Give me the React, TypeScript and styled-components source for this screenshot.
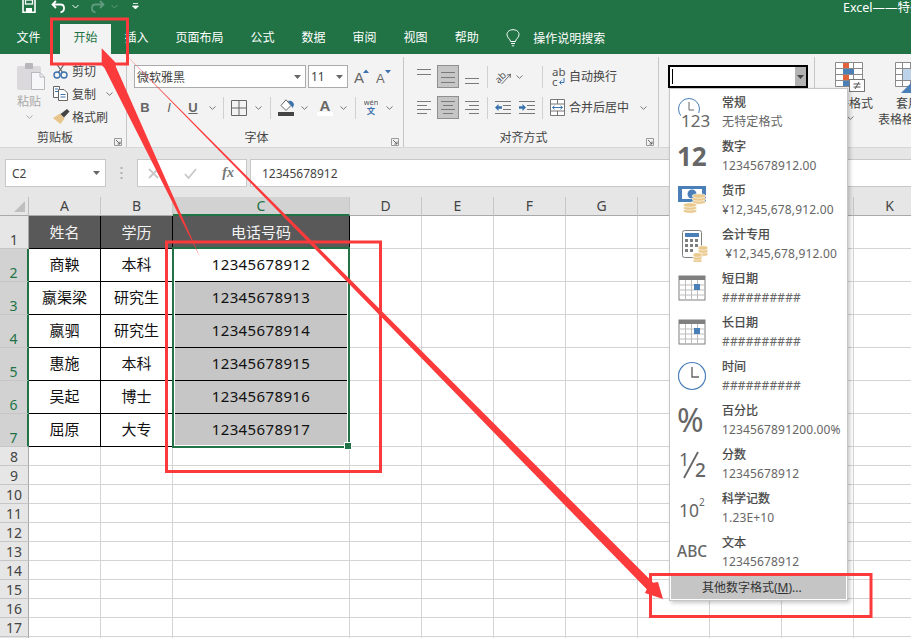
import React from 'react';
import styled, { createGlobalStyle } from 'styled-components';

const FONT = `"Noto Sans", "Noto Sans CJK SC", sans-serif`;
const GREEN = '#217346';
const RED = '#fb3a3c';
const ICON_GREY = '#7f7f7f';
const BLUE = '#4a7fb8';

const GlobalStyle = createGlobalStyle`
  html, body {
    margin: 0;
    padding: 0;
    background: #fff;
  }
  * {
    box-sizing: border-box;
  }
`;

const Page = styled.div`
  position: relative;
  width: 911px;
  height: 638px;
  overflow: hidden;
  display: flex;
  flex-direction: column;
  background: #e6e6e6;
  font-family: ${FONT};
  font-size: 12px;
  color: #444;
`;

const TitleBar = styled.div`
  height: 24px;
  flex: none;
  display: flex;
  align-items: flex-start;
  background: ${GREEN};
  color: #fff;
  padding-left: 22px;
  overflow: hidden;
`;

const QuickButton = styled.div<{ $w: number; $left?: number }>`
  width: ${(p) => p.$w}px;
  margin-left: ${(p) => p.$left ?? 0}px;
  display: flex;
  justify-content: center;
  flex: none;
`;

const TitleText = styled.div`
  margin-left: auto;
  width: 68px;
  white-space: nowrap;
  overflow: hidden;
  font-size: 12.5px;
  line-height: 15px;
`;

const TabBar = styled.div`
  height: 30px;
  flex: none;
  display: flex;
  align-items: stretch;
  padding-left: 3px;
  background: ${GREEN};
`;

const Tab = styled.div<{ $active?: boolean; $gap?: number }>`
  padding: 0 13.5px;
  margin-right: ${(p) => p.$gap ?? 0}px;
  display: flex;
  align-items: center;
  line-height: 1;
  padding-bottom: 2px;
  color: ${(p) => (p.$active ? GREEN : '#fff')};
  background: ${(p) => (p.$active ? '#f3f3f3' : 'transparent')};
`;

const SearchHint = styled.div`
  margin-left: 14px;
  display: flex;
  align-items: center;
  gap: 13px;
  color: #fff;
  padding-bottom: 2px;
`;

const Ribbon = styled.div`
  height: 94px;
  flex: none;
  display: flex;
  padding-top: 3px;
  background: #f3f3f3;
  border-bottom: 1px solid #d6d6d6;
`;

const RibbonGroup = styled.div<{ $w: number }>`
  width: ${(p) => p.$w}px;
  height: 90px;
  flex: none;
  display: flex;
  flex-direction: column;
  border-right: 1px solid #c6c6c6;
`;

const GroupBody = styled.div<{ $top?: number; $left?: number }>`
  flex: 1;
  min-height: 0;
  display: flex;
  flex-direction: column;
  padding-top: ${(p) => p.$top ?? 8}px;
  padding-left: ${(p) => p.$left ?? 0}px;
`;

const GroupLabel = styled.div<{ $pad: number }>`
  position: relative;
  height: 21px;
  flex: none;
  display: flex;
  align-items: center;
  justify-content: center;
  line-height: 1;
  padding: 2px ${(p) => p.$pad}px 0 0;
`;

const Launcher = styled.svg`
  position: absolute;
  right: 4px;
  bottom: 1px;
`;

const ClipLayout = styled.div`
  display: flex;
  padding-top: 1px;
`;

const PasteColumn = styled.div`
  width: 36px;
  flex: none;
  display: flex;
  flex-direction: column;
  margin-left: 17px;
  color: #a8a8a8;
`;

const PasteArt = styled.div`
  height: 32px;
  padding-top: 4px;
`;

const PasteLabel = styled.div`
  width: 24px;
  margin-top: 3px;
  line-height: 16px;
  white-space: nowrap;
`;

const PasteChevron = styled.div`
  width: 24px;
  display: flex;
  justify-content: center;
  margin-top: 5px;
`;

const ClipList = styled.div`
  display: flex;
  flex-direction: column;
`;

const ClipRow = styled.div`
  height: 23px;
  display: flex;
  align-items: center;
  white-space: nowrap;
`;

const ClipIcon = styled.div`
  width: 19px;
  flex: none;
  display: flex;
`;

const ClipChevron = styled.div`
  margin-left: 10px;
  display: flex;
`;

const ToolRow = styled.div<{ $top?: number }>`
  height: 23px;
  display: flex;
  align-items: center;
  margin-top: ${(p) => p.$top ?? 0}px;
`;

const ComboBox = styled.div<{ $w: number }>`
  width: ${(p) => p.$w}px;
  height: 23px;
  flex: none;
  display: flex;
  align-items: center;
  justify-content: space-between;
  padding: 0 4px 0 2px;
  margin-right: 2px;
  background: #fff;
  border: 1px solid #ababab;
  font-size: 12px;
  white-space: nowrap;
`;

const Tool = styled.div<{
  $w: number;
  $bold?: boolean;
  $italic?: boolean;
  $underline?: boolean;
  $left?: number;
  $right?: number;
}>`
  width: ${(p) => p.$w}px;
  height: 23px;
  flex: none;
  display: flex;
  align-items: center;
  justify-content: center;
  margin: 0 ${(p) => p.$right ?? 0}px 0 ${(p) => p.$left ?? 0}px;
  font-family: "Liberation Sans", sans-serif;
  font-size: 13px;
  color: #666;
  font-weight: ${(p) => (p.$bold ? 700 : 400)};
  font-style: ${(p) => (p.$italic ? 'italic' : 'normal')};
  text-decoration: ${(p) => (p.$underline ? 'underline' : 'none')};
`;

const ToolSeparator = styled.div<{ $left: number; $right: number }>`
  width: 1px;
  height: 22px;
  flex: none;
  margin: 0 ${(p) => p.$right}px 0 ${(p) => p.$left}px;
  background: #d0d0d0;
`;

const PressedTool = styled.div`
  width: 22px;
  height: 23px;
  flex: none;
  margin: 0 6px;
  display: flex;
  align-items: center;
  justify-content: center;
  background: #c6c6c6;
  border: 1px solid #8f8f8f;
`;

const RowText = styled.div`
  white-space: nowrap;
  color: #444;
  line-height: 1;
`;

const NumberCombo = styled.div`
  width: 140px;
  height: 23px;
  margin-left: 9px;
  display: flex;
  justify-content: space-between;
  background: #fff;
  border: 2px solid #000;
`;

const TextCaret = styled.div`
  width: 1px;
  height: 15px;
  margin: 2px 0 0 2px;
  background: #000;
`;

const ComboArrow = styled.div`
  width: 11px;
  display: flex;
  align-items: center;
  justify-content: center;
  background: #b3b3b3;
`;

const StylesBody = styled.div`
  display: flex;
  padding: 5px 0 0 10px;
`;

const StyleColumn = styled.div<{ $w: number; $gap: number }>`
  width: ${(p) => p.$w}px;
  margin-right: ${(p) => p.$gap}px;
  flex: none;
  display: flex;
  flex-direction: column;
  line-height: 16px;
  white-space: nowrap;
`;

const StyleIcon = styled.div<{ $left: number }>`
  height: 31px;
  padding-left: ${(p) => p.$left}px;
  margin-bottom: 3px;
`;

const StyleLine = styled.div<{ $left?: number }>`
  padding-left: ${(p) => p.$left ?? 0}px;
`;

const StyleChevron = styled.div`
  display: flex;
  justify-content: center;
  padding: 4px 0 0 2px;
`;

const FormulaRow = styled.div`
  height: 49px;
  flex: none;
  display: flex;
  padding: 11px 0 10px 5px;
  background: #e6e6e6;
`;

const NameBox = styled.div`
  width: 101px;
  flex: none;
  display: flex;
  align-items: center;
  justify-content: space-between;
  padding: 0 5px 0 6px;
  background: #fff;
  border: 1px solid #c8c8c8;
`;

const FormulaDots = styled.div`
  width: 31px;
  flex: none;
  display: flex;
  align-items: center;
  justify-content: center;
`;

const FormulaButtons = styled.div`
  width: 110px;
  flex: none;
  display: flex;
  align-items: center;
  justify-content: space-between;
  padding: 0 12px 0 10px;
  background: #fff;
  border: 1px solid #c8c8c8;
`;

const FxMark = styled.span`
  font-family: "Liberation Serif", serif;
  font-style: italic;
  font-size: 14px;
  font-weight: 700;
  color: #777;
`;

const FormulaInput = styled.div`
  flex: 1;
  margin-left: 3px;
  display: flex;
  align-items: center;
  padding-left: 11px;
  background: #fff;
  border: 1px solid #c8c8c8;
  border-right: 0;
`;

const Sheet = styled.div`
  position: relative;
  flex: 1;
  min-height: 0;
  overflow: hidden;
  display: grid;
  grid-template-columns: 29px 72px 72px 177px repeat(8, 72px);
  grid-template-rows: 19px repeat(7, 33px) repeat(11, 19px);
  background: #fff;
`;

const Corner = styled.div`
  position: relative;
  background: #e6e6e6;
  border-right: 1px solid #bdbdbd;
  border-bottom: 1px solid #a9a9a9;
  &::after {
    content: '';
    position: absolute;
    right: 3px;
    bottom: 3px;
    border-style: solid;
    border-width: 0 0 11px 11px;
    border-color: transparent transparent #bfbfbf transparent;
  }
`;

const ColumnHeader = styled.div<{ $selected?: boolean }>`
  display: flex;
  align-items: center;
  justify-content: center;
  font-size: 14px;
  line-height: 1;
  color: ${(p) => (p.$selected ? GREEN : '#444')};
  background: ${(p) => (p.$selected ? '#d2d2d2' : '#e6e6e6')};
  border-right: 1px solid #c6c6c6;
  border-bottom: ${(p) => (p.$selected ? `2px solid ${GREEN}` : '1px solid #a9a9a9')};
`;

const RowHeader = styled.div<{ $selected?: boolean }>`
  display: flex;
  align-items: flex-end;
  justify-content: center;
  font-size: 14px;
  line-height: 17px;
  color: ${(p) => (p.$selected ? GREEN : '#444')};
  background: ${(p) => (p.$selected ? '#d2d2d2' : '#e6e6e6')};
  border-right: ${(p) => (p.$selected ? `2px solid ${GREEN}` : '1px solid #a9a9a9')};
  border-bottom: 1px solid #c6c6c6;
`;

const Cell = styled.div`
  border-right: 1px solid #d4d4d4;
  border-bottom: 1px solid #d4d4d4;
`;

const TableCell = styled.div<{ $head?: boolean; $shade?: boolean; $digits?: boolean }>`
  display: flex;
  align-items: center;
  justify-content: center;
  padding-bottom: ${(p) => (p.$head ? 0 : 2)}px;
  font-size: 15px;
  line-height: 1;
  white-space: nowrap;
  letter-spacing: ${(p) => (p.$digits ? '0.38px' : '0')};
  color: ${(p) => (p.$head ? '#f2f2f2' : '#111')};
  background: ${(p) => (p.$head ? '#595959' : p.$shade ? '#c6c6c6' : '#fff')};
  border-right: 1px solid #000;
  border-bottom: 1px solid #000;
`;

const SelectionFrame = styled.div`
  position: absolute;
  left: 172px;
  top: 50px;
  width: 178px;
  height: 201px;
  border: 2px solid ${GREEN};
  box-shadow: inset 0 0 0 1px #fff;
`;

const FillHandle = styled.div`
  position: absolute;
  right: -3px;
  bottom: -3px;
  width: 6px;
  height: 6px;
  background: ${GREEN};
  outline: 1px solid #fff;
`;

const FormatMenu = styled.div`
  position: absolute;
  left: 669px;
  top: 88px;
  width: 179px;
  height: 513px;
  display: flex;
  flex-direction: column;
  padding-top: 1px;
  background: #fff;
  border: 1px solid #c6c6c6;
  box-shadow: 2px 2px 4px rgba(0, 0, 0, 0.22);
`;

const MenuItem = styled.div`
  height: 44px;
  flex: none;
  display: flex;
  padding-left: 6px;
`;

const MenuIcon = styled.div`
  width: 46px;
  flex: none;
  padding-top: 4px;
`;

const MenuText = styled.div`
  display: flex;
  flex-direction: column;
  padding-top: 4px;
  white-space: pre;
`;

const MenuTitle = styled.div`
  line-height: 17px;
  color: #444;
  font-weight: 400;
  -webkit-text-stroke: 0.25px #444;
`;

const MenuSample = styled.div`
  line-height: 22px;
  color: #666;
  letter-spacing: 0.15px;
`;

const MoreFormats = styled.div`
  height: 26px;
  display: flex;
  align-items: center;
  padding-left: 31px;
  background: #c5c5c5;
  border: 1px solid #fff;
  color: #333;
`;

const Annotations = styled.svg`
  position: absolute;
  left: 0;
  top: 0;
  pointer-events: none;
`;

const Chevron = ({ color = '#777' }: { color?: string }) => (
  <svg width="7" height="4" viewBox="0 0 7 4">
    <path d="M0.5 0.5 L3.5 3.3 L6.5 0.5" fill="none" stroke={color} strokeWidth="1" />
  </svg>
);

const Caret = ({ color = '#666' }: { color?: string }) => (
  <svg width="7" height="4" viewBox="0 0 7 4">
    <path d="M0 0 H7 L3.5 4 Z" fill={color} />
  </svg>
);

const LauncherIcon = () => (
  <Launcher width="8" height="8" viewBox="0 0 8 8">
    <path d="M0.5 7.5 V0.5 H7.5 V7.5 H0.5" fill="none" stroke="#999" strokeWidth="1" />
    <path d="M2 2 L6 6 M6 3.5 V6 H3.5" fill="none" stroke="#666" strokeWidth="1" />
  </Launcher>
);

// lines for the alignment buttons: y, x1, x2
const Lines = ({ w, h, rows }: { w: number; h: number; rows: [number, number, number][] }) => (
  <svg width={w} height={h} viewBox={`0 0 ${w} ${h}`}>
    {rows.map(([y, a, b]) => (
      <path key={y} d={`M${a} ${y + 0.5} H${b}`} stroke="#7a7a7a" strokeWidth="1" />
    ))}
  </svg>
);

const PasteIcon = () => (
  <svg width="28" height="28" viewBox="0 0 28 28">
    <rect x="0" y="3" width="24" height="24" rx="2" fill="#dcd9dd" />
    <rect x="8" y="0" width="8" height="6" rx="1" fill="#b9b6bb" />
    <path d="M14.5 9.5 H23 L27.5 14 V26.5 H14.5 Z" fill="#f7f6f8" stroke="#bcb8bf" />
    <path d="M23 9.5 V14 H27.5" fill="none" stroke="#bcb8bf" />
  </svg>
);

const ScissorsIcon = () => (
  <svg width="15" height="17" viewBox="0 0 15 17">
    <path d="M3 1 L10 11 M12 1 L5 11" stroke="#666" strokeWidth="1.3" fill="none" />
    <circle cx="4" cy="13" r="3" fill="none" stroke="#3a72ad" strokeWidth="1.4" />
    <circle cx="11" cy="13" r="3" fill="none" stroke="#3a72ad" strokeWidth="1.4" />
  </svg>
);

const CopyIcon = () => (
  <svg width="15" height="15" viewBox="0 0 15 15">
    <path d="M0.5 0.5 H6.5 V11.5 H0.5 Z" fill="#fff" stroke="#666" />
    <path d="M5.5 3.5 H11 L14.5 7 V14.5 H5.5 Z" fill="#fff" stroke="#666" />
    <path d="M2 3 H5 M2 5.5 H5 M7.5 8.5 H12.5 M7.5 11 H12.5" stroke="#3a72ad" strokeWidth="1" />
  </svg>
);

const BrushIcon = () => (
  <svg width="17" height="15" viewBox="0 0 17 15">
    <path d="M0 9 L7 4.5 L11.5 9.5 L7.5 15 C5 13 2 11 0 9 Z" fill="#e8c58a" />
    <path d="M7.5 5 L14 0 L16.5 2.5 L11 8.5 Z" fill="#444" />
  </svg>
);

const BordersIcon = () => (
  <svg width="16" height="16" viewBox="0 0 16 16">
    <path d="M0.5 0.5 H15.5 V15.5 H0.5 Z M8 0.5 V15.5 M0.5 8 H15.5" fill="none" stroke="#666" strokeWidth="1" />
  </svg>
);

const FillIcon = () => (
  <svg width="17" height="17" viewBox="0 0 17 17">
    <path d="M8 0.8 L3 6.5 L8 11.5 L13 6.5 Z" fill="#fff" stroke="#666" />
    <path d="M10 2 C13 1 16 3 16 6 L14.5 9 L13 6.5 Z" fill="#3a72ad" />
    <rect x="0" y="13" width="16" height="4" fill="#444" />
  </svg>
);

const FontColorIcon = () => (
  <svg width="16" height="17" viewBox="0 0 16 17">
    <text x="8" y="12" textAnchor="middle" fontFamily="Liberation Sans, sans-serif" fontWeight="700" fontSize="15" fill="#666">A</text>
    <rect x="0" y="13" width="16" height="4" fill="#fff" />
  </svg>
);

const PhoneticIcon = () => (
  <svg width="16" height="19" viewBox="0 0 16 19">
    <text x="8" y="7" textAnchor="middle" fontFamily="Noto Sans, sans-serif" fontSize="8.5" fill="#555">wén</text>
    <text x="8" y="17" textAnchor="middle" fontFamily="Noto Sans CJK SC, sans-serif" fontSize="9.5" fontWeight="700" fill="#3a72ad">文</text>
  </svg>
);

const GrowFont = ({ up }: { up: boolean }) => (
  <svg width="17" height="15" viewBox="0 0 17 15">
    <text x="0" y="14" fontFamily="Liberation Sans, sans-serif" fontSize={up ? 15 : 13} fill="#666">A</text>
    <path d={up ? 'M9 4 L12 0.5 L15 4 Z' : 'M9 1 H15 L12 4.5 Z'} fill="#3a72ad" />
  </svg>
);

const OrientIcon = () => (
  <svg width="18" height="18" viewBox="0 0 18 18">
    <text x="0" y="13" transform="rotate(-45 6 10)" fontFamily="Noto Sans, sans-serif" fontSize="10.5" fill="#555">ab</text>
    <path d="M7 16.5 L16.5 6 M12.5 7 L16.5 6 L16 10" fill="none" stroke="#666" strokeWidth="1" />
  </svg>
);

const WrapIcon = () => (
  <svg width="14" height="20" viewBox="0 0 14 20">
    <text x="0" y="9" fontFamily="Noto Sans, sans-serif" fontSize="11.5" fill="#555">ab</text>
    <text x="0" y="19" fontFamily="Noto Sans, sans-serif" fontSize="11.5" fill="#555">c</text>
    <path d="M12 11 V15.5 H8 M9.5 13.5 L7.5 15.5 L9.5 17.5" fill="none" stroke="#3a72ad" strokeWidth="1" />
  </svg>
);

const IndentIcon = ({ flip }: { flip: boolean }) => (
  <svg width="16" height="13" viewBox="0 0 16 13">
    <path d="M0 0.5 H16 M0 12.5 H16 M8 4.5 H16 M8 8.5 H16" stroke="#777" strokeWidth="1" />
    {flip ? (
      <path d="M0 6.5 L3.5 3 V5.2 H7 V7.8 H3.5 V10 Z" fill="#3a72ad" />
    ) : (
      <path d="M7 6.5 L3.5 3 V5.2 H0 V7.8 H3.5 V10 Z" fill="#3a72ad" />
    )}
  </svg>
);

const MergeIcon = () => (
  <svg width="15" height="17" viewBox="0 0 15 17">
    <path d="M0.5 0.5 H14.5 V16.5 H0.5 Z M0.5 5 H14.5 M0.5 12 H14.5 M7.5 0.5 V5 M7.5 12 V16.5" fill="#fff" stroke="#777" strokeWidth="1" />
    <path d="M2.5 8.5 H12.5 M4.5 6.8 L2.5 8.5 L4.5 10.2 M10.5 6.8 L12.5 8.5 L10.5 10.2" fill="none" stroke="#3a72ad" strokeWidth="1" />
  </svg>
);

const CondFormatIcon = () => (
  <svg width="31" height="31" viewBox="0 0 31 31">
    <path d="M0.5 0.5 H27.5 V24.5 H0.5 Z M9.5 0.5 V24.5 M18.5 0.5 V24.5 M0.5 6.5 H27.5 M0.5 12.5 H27.5 M0.5 18.5 H27.5" fill="#fff" stroke="#8a8a8a" strokeWidth="1" />
    <rect x="8" y="1" width="6" height="5" fill="#e0633c" />
    <rect x="8" y="7" width="11" height="5" fill="#4a7fb8" />
    <rect x="8" y="13" width="6" height="5" fill="#e0633c" />
    <rect x="8" y="19" width="8" height="5" fill="#4a7fb8" />
    <rect x="14.5" y="17.5" width="15" height="12" fill="#fff" stroke="#777" />
    <path d="M18.5 22 H25.5 M18.5 25 H25.5 M24 20 L20 27" stroke="#555" strokeWidth="1" fill="none" />
  </svg>
);

const TableStyleIcon = () => (
  <svg width="32" height="31" viewBox="0 0 32 31">
    <path d="M0.5 0.5 H31 V24.5 H0.5 Z M7.5 0.5 V24.5 M15.5 0.5 V24.5 M0.5 6.5 H31 M0.5 12.5 H31 M0.5 18.5 H31" fill="#fff" stroke="#8a8a8a" strokeWidth="1" />
    <rect x="8" y="7" width="20" height="11" fill="#bcd3ea" />
    <path d="M6 31 L17 20 L25 31 Z" fill="#4a7fb8" />
  </svg>
);

const CalendarIcon = () => (
  <svg width="34" height="36" viewBox="0 0 34 36">
    <rect x="3" y="6" width="26" height="24" fill="#fff" stroke={ICON_GREY} />
    <rect x="3" y="6" width="26" height="4" fill={ICON_GREY} />
    <path
      d="M9.5 10 V30 M15.5 10 V30 M21.5 10 V30 M3 15 H29 M3 20 H29 M3 25 H29"
      stroke="#bdbdbd"
      strokeWidth="1"
      fill="none"
    />
    <rect x="18" y="14" width="6" height="6" fill={BLUE} />
  </svg>
);

const Coins = ({ x, y, w }: { x: number; y: number; w: number }) => (
  <g fill="#e9c98d" stroke="#fff" strokeWidth="0.6">
    {[6, 3, 0].map((d) => (
      <ellipse key={d} cx={x + w / 2} cy={y + d + 2} rx={w / 2} ry="2.2" />
    ))}
  </g>
);

const numberText = {
  fontFamily: 'Noto Sans, sans-serif',
  fill: '#666',
};

const menuIcons: Record<string, React.ReactNode> = {
  general: (
    <svg width="34" height="36" viewBox="0 0 34 36">
      <circle cx="13" cy="15" r="10.5" fill="none" stroke={BLUE} strokeWidth="1" />
      <path d="M13 8 V16 H18" fill="none" stroke="#666" strokeWidth="1" />
      <rect x="5" y="19" width="26" height="16" fill="#fff" />
      <text x="5" y="33" fontSize="17" {...numberText}>123</text>
    </svg>
  ),
  number: (
    <svg width="34" height="36" viewBox="0 0 34 36">
      <text x="1" y="28" fontSize="26" fontWeight="700" {...numberText}>12</text>
    </svg>
  ),
  currency: (
    <svg width="34" height="36" viewBox="0 0 34 36">
      <rect x="2" y="4" width="28" height="16" fill={BLUE} />
      <rect x="6" y="7" width="20" height="10" fill="#fff" />
      <circle cx="16" cy="12" r="4.5" fill={BLUE} />
      <path d="M2 4 H7 L2 9 Z M30 4 H25 L30 9 Z M2 20 H7 L2 15 Z" fill={BLUE} />
      <Coins x={16} y={12} w={14} />
      <Coins x={7} y={21} w={14} />
    </svg>
  ),
  accounting: (
    <svg width="34" height="36" viewBox="0 0 34 36">
      <rect x="6.5" y="4.5" width="19" height="27" rx="2" fill="#fff" stroke={ICON_GREY} />
      <rect x="9" y="7" width="14" height="4" fill={BLUE} />
      <path
        d="M9 13 h3 v3 h-3 z M14 13 h3 v3 h-3 z M19 13 h3 v3 h-3 z M9 18 h3 v3 h-3 z M14 18 h3 v3 h-3 z M19 18 h3 v3 h-3 z M9 23 h3 v3 h-3 z M14 23 h3 v3 h-3 z"
        fill={ICON_GREY}
      />
      <Coins x={22} y={20} w={10} />
      <Coins x={17} y={27} w={9} />
    </svg>
  ),
  date: <CalendarIcon />,
  time: (
    <svg width="34" height="36" viewBox="0 0 34 36">
      <circle cx="16" cy="18" r="13.5" fill="none" stroke={BLUE} strokeWidth="1.2" />
      <path d="M16 9 V19 H23" fill="none" stroke="#666" strokeWidth="1.4" />
    </svg>
  ),
  percent: (
    <svg width="34" height="36" viewBox="0 0 34 36">
      <text x="1" y="30" fontSize="32" {...numberText}>%</text>
    </svg>
  ),
  fraction: (
    <svg width="34" height="36" viewBox="0 0 34 36">
      <text x="3" y="20" fontSize="18" {...numberText}>1</text>
      <text x="19" y="31" fontSize="19" fontWeight="500" {...numberText}>2</text>
      <path d="M22 6 L8 32" stroke="#666" strokeWidth="1.8" />
    </svg>
  ),
  scientific: (
    <svg width="34" height="36" viewBox="0 0 34 36">
      <text x="3" y="27" fontSize="17.5" {...numberText}>10</text>
      <text x="23" y="16" fontSize="10" {...numberText}>2</text>
    </svg>
  ),
  text: (
    <svg width="34" height="36" viewBox="0 0 34 36">
      <text x="1" y="23" fontSize="15.5" fontWeight="500" {...numberText}>ABC</text>
    </svg>
  ),
};

const formats = [
  { icon: 'general', title: '常规', sample: '无特定格式' },
  { icon: 'number', title: '数字', sample: '12345678912.00' },
  { icon: 'currency', title: '货币', sample: '¥12,345,678,912.00' },
  { icon: 'accounting', title: '会计专用', sample: ' ¥12,345,678,912.00' },
  { icon: 'date', title: '短日期', sample: '##########' },
  { icon: 'date', title: '长日期', sample: '##########' },
  { icon: 'time', title: '时间', sample: '##########' },
  { icon: 'percent', title: '百分比', sample: '1234567891200.00%' },
  { icon: 'fraction', title: '分数', sample: '12345678912' },
  { icon: 'scientific', title: '科学记数', sample: '1.23E+10' },
  { icon: 'text', title: '文本', sample: '12345678912' },
];

const tabs = ['插入', '页面布局', '公式', '数据', '审阅', '视图', '帮助'];
const columns = ['A', 'B', 'C', 'D', 'E', 'F', 'G', 'H', 'I', 'J', 'K'];
const people = [
  ['商鞅', '本科', '12345678912'],
  ['嬴渠梁', '研究生', '12345678913'],
  ['嬴驷', '研究生', '12345678914'],
  ['惠施', '本科', '12345678915'],
  ['吴起', '博士', '12345678916'],
  ['屈原', '大专', '12345678917'],
];

const EmptyCells = ({ count }: { count: number }) => (
  <>
    {Array.from({ length: count }, (_, i) => (
      <Cell key={i} />
    ))}
  </>
);

const App: React.FC = () => {
  return (
    <Page>
      <GlobalStyle />
      <TitleBar>
        <QuickButton $w={14}>
          <svg width="14" height="13" viewBox="0 0 14 13">
            <path d="M1 0 V12.3 H13 V0" fill="none" stroke="#fff" strokeWidth="1.6" />
            <rect x="3.5" y="0" width="7" height="4" fill="none" stroke="#fff" strokeWidth="1.3" />
            <rect x="4" y="8" width="6" height="4.5" fill="#fff" />
          </svg>
        </QuickButton>
        <QuickButton $w={22} $left={12}>
          <svg width="16" height="14" viewBox="0 0 16 14">
            <path d="M5 1 L1.5 4.5 L5 8 M2 4.5 H9.5 C14 4.5 14.5 11 9.5 12.5" fill="none" stroke="#fff" strokeWidth="1.8" />
          </svg>
        </QuickButton>
        <QuickButton $w={10}>
          <svg width="7" height="12" viewBox="0 0 7 12">
            <path d="M0.5 5 L3.5 8 L6.5 5" fill="none" stroke="#fff" strokeWidth="1" />
          </svg>
        </QuickButton>
        <QuickButton $w={22} $left={6}>
          <svg width="16" height="14" viewBox="0 0 16 14">
            <path d="M11 1 L14.5 4.5 L11 8 M14 4.5 H6.5 C2 4.5 1.5 11 6.5 12.5" fill="none" stroke="#5f9a7d" strokeWidth="1.8" />
          </svg>
        </QuickButton>
        <QuickButton $w={12}>
          <svg width="7" height="12" viewBox="0 0 7 12">
            <path d="M0.5 5 L3.5 8 L6.5 5" fill="none" stroke="#5f9a7d" strokeWidth="1" />
          </svg>
        </QuickButton>
        <QuickButton $w={10} $left={10}>
          <svg width="7" height="12" viewBox="0 0 7 12">
            <path d="M1 3.5 H6 M0.5 6 H6.5 L3.5 9 Z" fill="#fff" stroke="#fff" strokeWidth="0.8" />
          </svg>
        </QuickButton>
        <TitleText>Excel——特殊</TitleText>
      </TitleBar>

      <TabBar>
        <Tab $gap={6}>文件</Tab>
        <Tab $active>开始</Tab>
        {tabs.map((t) => (
          <Tab key={t}>{t}</Tab>
        ))}
        <SearchHint>
          <svg width="14" height="18" viewBox="0 0 14 18">
            <path
              d="M4.5 12.5 C4.5 10 1 9 1 5.5 C1 2.5 3.8 0.7 7 0.7 C10.2 0.7 13 2.5 13 5.5 C13 9 9.5 10 9.5 12.5 Z M5 14.5 H9 M5.8 16.8 H8.2"
              fill="none"
              stroke="#fff"
              strokeWidth="1"
            />
          </svg>
          操作说明搜索
        </SearchHint>
      </TabBar>

      <Ribbon>
        <RibbonGroup $w={127}>
          <GroupBody $top={1}>
            <ClipLayout>
              <PasteColumn>
                <PasteArt>
                  <PasteIcon />
                </PasteArt>
                <PasteLabel>粘贴</PasteLabel>
                <PasteChevron>
                  <Chevron color="#aaa" />
                </PasteChevron>
              </PasteColumn>
              <ClipList>
                <ClipRow>
                  <ClipIcon>
                    <ScissorsIcon />
                  </ClipIcon>
                  剪切
                </ClipRow>
                <ClipRow>
                  <ClipIcon>
                    <CopyIcon />
                  </ClipIcon>
                  复制
                  <ClipChevron>
                    <Chevron />
                  </ClipChevron>
                </ClipRow>
                <ClipRow>
                  <ClipIcon>
                    <BrushIcon />
                  </ClipIcon>
                  格式刷
                </ClipRow>
              </ClipList>
            </ClipLayout>
          </GroupBody>
          <GroupLabel $pad={16}>
            剪贴板
            <LauncherIcon />
          </GroupLabel>
        </RibbonGroup>

        <RibbonGroup $w={277}>
          <GroupBody $left={7}>
            <ToolRow>
              <ComboBox $w={172}>
                微软雅黑
                <Caret />
              </ComboBox>
              <ComboBox $w={40}>
                11
                <Caret />
              </ComboBox>
              <Tool $w={24}>
                <GrowFont up />
              </Tool>
              <Tool $w={20}>
                <GrowFont up={false} />
              </Tool>
            </ToolRow>
            <ToolRow $top={8}>
              <Tool $w={24} $bold $left={-1}>B</Tool>
              <Tool $w={24} $italic>I</Tool>
              <Tool $w={24} $bold $underline>U</Tool>
              <Tool $w={14}><Chevron /></Tool>
              <ToolSeparator $left={4} $right={4} />
              <Tool $w={22}><BordersIcon /></Tool>
              <Tool $w={16}><Chevron /></Tool>
              <ToolSeparator $left={4} $right={4} />
              <Tool $w={22}><FillIcon /></Tool>
              <Tool $w={14}><Chevron /></Tool>
              <Tool $w={28}><FontColorIcon /></Tool>
              <Tool $w={8}><Chevron /></Tool>
              <ToolSeparator $left={8} $right={8} />
              <Tool $w={14}><PhoneticIcon /></Tool>
              <Tool $w={22}><Chevron /></Tool>
            </ToolRow>
          </GroupBody>
          <GroupLabel $pad={17}>
            字体
            <LauncherIcon />
          </GroupLabel>
        </RibbonGroup>

        <RibbonGroup $w={255}>
          <GroupBody $left={13}>
            <ToolRow>
              <Tool $w={14}><Lines w={14} h={23} rows={[[4, 0, 14], [9, 0, 14]]} /></Tool>
              <PressedTool><Lines w={14} h={21} rows={[[6, 0, 14], [11, 0, 14], [16, 0, 14]]} /></PressedTool>
              <Tool $w={14}><Lines w={14} h={23} rows={[[13, 0, 14], [18, 0, 14]]} /></Tool>
              <ToolSeparator $left={8} $right={7} />
              <Tool $w={17}><OrientIcon /></Tool>
              <Tool $w={14}><Chevron /></Tool>
              <ToolSeparator $left={16} $right={9} />
              <Tool $w={14} $right={3}><WrapIcon /></Tool>
              <RowText>自动换行</RowText>
            </ToolRow>
            <ToolRow $top={8}>
              <Tool $w={14}><Lines w={14} h={23} rows={[[5, 0, 14], [9, 0, 10], [13, 0, 14], [17, 0, 10]]} /></Tool>
              <PressedTool><Lines w={14} h={21} rows={[[4, 0, 14], [8, 2, 12], [12, 0, 14], [16, 2, 12]]} /></PressedTool>
              <Tool $w={14}><Lines w={14} h={23} rows={[[5, 0, 14], [9, 4, 14], [13, 0, 14], [17, 4, 14]]} /></Tool>
              <ToolSeparator $left={8} $right={7} />
              <Tool $w={16} $right={8}><IndentIcon flip /></Tool>
              <Tool $w={16}><IndentIcon flip={false} /></Tool>
              <ToolSeparator $left={7} $right={7} />
              <Tool $w={15} $right={4}><MergeIcon /></Tool>
              <RowText>合并后居中</RowText>
              <Tool $w={28}><Chevron /></Tool>
            </ToolRow>
          </GroupBody>
          <GroupLabel $pad={15}>
            对齐方式
            <LauncherIcon />
          </GroupLabel>
        </RibbonGroup>

        <RibbonGroup $w={156}>
          <GroupBody>
            <NumberCombo>
              <TextCaret />
              <ComboArrow>
                <Caret color="#444" />
              </ComboArrow>
            </NumberCombo>
          </GroupBody>
        </RibbonGroup>

        <StylesBody>
          <StyleColumn $w={48} $gap={5}>
            <StyleIcon $left={10}>
              <CondFormatIcon />
            </StyleIcon>
            <StyleLine>条件格式</StyleLine>
            <StyleChevron>
              <Chevron />
            </StyleChevron>
          </StyleColumn>
          <StyleColumn $w={60} $gap={0}>
            <StyleIcon $left={17}>
              <TableStyleIcon />
            </StyleIcon>
            <StyleLine $left={18}>套用</StyleLine>
            <StyleLine>表格格式</StyleLine>
          </StyleColumn>
        </StylesBody>
      </Ribbon>

      <FormulaRow>
        <NameBox>
          C2
          <Caret />
        </NameBox>
        <FormulaDots>
          <svg width="3" height="13" viewBox="0 0 3 13">
            <path d="M0.5 0 h2 v2 h-2 z M0.5 5 h2 v2 h-2 z M0.5 10 h2 v2 h-2 z" fill="#b0b0b0" />
          </svg>
        </FormulaDots>
        <FormulaButtons>
          <svg width="11" height="11" viewBox="0 0 11 11">
            <path d="M1 1 L10 10 M10 1 L1 10" stroke="#c8c8c8" strokeWidth="1.8" />
          </svg>
          <svg width="13" height="11" viewBox="0 0 13 11">
            <path d="M1 6 L4.5 10 L12 1" fill="none" stroke="#c8c8c8" strokeWidth="1.8" />
          </svg>
          <FxMark>fx</FxMark>
        </FormulaButtons>
        <FormulaInput>12345678912</FormulaInput>
      </FormulaRow>

      <Sheet>
        <Corner />
        {columns.map((c) => (
          <ColumnHeader key={c} $selected={c === 'C'}>
            {c}
          </ColumnHeader>
        ))}

        <RowHeader>1</RowHeader>
        <TableCell $head>姓名</TableCell>
        <TableCell $head>学历</TableCell>
        <TableCell $head>电话号码</TableCell>
        <EmptyCells count={8} />

        {people.map(([name, degree, phone], i) => (
          <React.Fragment key={phone}>
            <RowHeader $selected>{i + 2}</RowHeader>
            <TableCell>{name}</TableCell>
            <TableCell>{degree}</TableCell>
            <TableCell $digits $shade={i > 0}>
              {phone}
            </TableCell>
            <EmptyCells count={8} />
          </React.Fragment>
        ))}

        {Array.from({ length: 11 }, (_, i) => (
          <React.Fragment key={i}>
            <RowHeader>{i + 8}</RowHeader>
            <EmptyCells count={11} />
          </React.Fragment>
        ))}

        <SelectionFrame>
          <FillHandle />
        </SelectionFrame>
      </Sheet>

      <FormatMenu>
        {formats.map((f) => (
          <MenuItem key={f.title}>
            <MenuIcon>{menuIcons[f.icon]}</MenuIcon>
            <MenuText>
              <MenuTitle>{f.title}</MenuTitle>
              <MenuSample>{f.sample}</MenuSample>
            </MenuText>
          </MenuItem>
        ))}
        <MoreFormats>
          其他数字格式(<u>M</u>)...
        </MoreFormats>
      </FormatMenu>

      {/* red marks someone drew on top of the screenshot */}
      <Annotations width="911" height="638" viewBox="0 0 911 638">
        <g fill="none" stroke={RED} strokeWidth="3">
          <rect x="51.5" y="19" width="76" height="45" />
          <rect x="166.5" y="242" width="214" height="229.5" />
          <rect x="650.5" y="574.5" width="220.5" height="42" />
        </g>
        <g fill={RED}>
          <path d="M200 257 L116 67 L115 62 L101.7 48.3 L101.7 65 L104.5 68 Z" />
          <path d="M119 48 L653.2 582.8 L658 582 L663 599 L645 593 L646.8 589.2 Z" />
        </g>
      </Annotations>
    </Page>
  );
};

export default App;
